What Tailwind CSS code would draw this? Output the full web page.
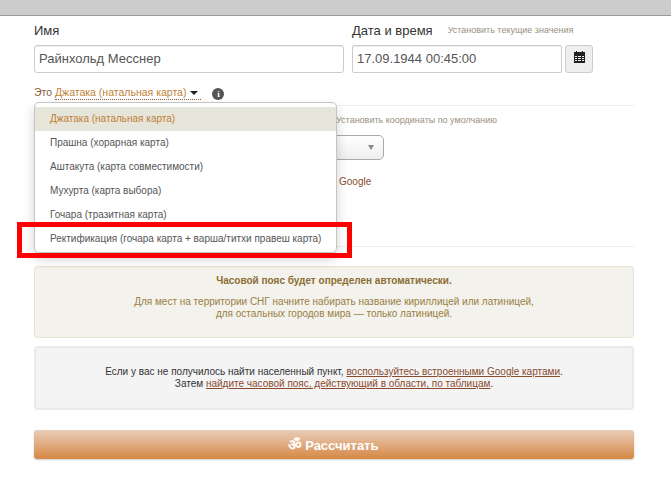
<!DOCTYPE html>
<html lang="ru">
<head>
  <meta charset="UTF-8">
  <title>Джатака</title>
  <script src="https://cdn.jsdelivr.net/npm/@tailwindcss/browser@4"></script>
</head>
<body class="bg-white h-[485px] overflow-hidden font-['Liberation_Sans',sans-serif] text-[#333]">
  <div class="h-[16px] bg-[#cccccc] border-b border-[#999]"></div>

  <div class="relative w-[600px] ml-[34px]">
    <!-- name + date -->
    <div class="flex gap-2 pt-[6px]">
      <div class="w-[310px]">
        <div class="text-[13px] h-[17px] leading-[17px] mb-[6px]">Имя</div>
        <div class="h-[28px] border border-[#ccc] rounded-[3px] px-[4px] text-[13px] leading-[26px] text-[#555] shadow-[inset_0_1px_1px_rgba(0,0,0,0.075)]">Райнхольд Месснер</div>
      </div>
      <div>
        <div class="flex items-center gap-[15px] h-[17px] text-[13px] leading-[17px] mb-[6px]">
          <span>Дата и время</span>
          <span class="text-[9px] text-[#9a8f7e]">Установить текущие значения</span>
        </div>
        <div class="flex gap-[3px]">
          <div class="w-[210px] h-[28px] border border-[#ccc] rounded-[2px] px-[4px] text-[13px] leading-[26px] text-[#555] shadow-[inset_0_1px_1px_rgba(0,0,0,0.075)]">17.09.1944 00:45:00</div>
          <div class="w-[28px] h-[28px] border border-[#ccc] rounded-[3px] bg-[#eee] flex items-center justify-center">
            <svg class="mb-[5px]" width="11" height="12" viewBox="0 0 11 12" fill="#222" shape-rendering="crispEdges">
              <rect x="2" y="0" width="1" height="1"/><rect x="8" y="0" width="1" height="1"/>
              <rect x="0" y="1" width="11" height="3"/>
              <path d="M0 4h11v1H0zM0 6h11v1H0zM0 8h11v1H0zM0 10h11v2H0zM0 4h1v8H0zM3 4h1v8H3zM7 4h1v8H7zM10 4h1v8H10z"/>
            </svg>
          </div>
        </div>
      </div>
    </div>

    <!-- chart type -->
    <div class="flex items-center h-[16px] mt-[12px] text-[10.5px] text-[#8a5a35]">
      <span>Это&nbsp;</span>
      <span class="flex items-center gap-[4px] pr-[3px] border-b border-dotted border-[#8a5a35] text-[#c07f35] leading-[13px]">
        Джатака (натальная карта)
        <span class="w-0 h-0 border-x-[4px] border-x-transparent border-t-[4px] border-t-[#222]"></span>
      </span>
      <span class="ml-[11px] mt-[2px] w-[12px] h-[12px] rounded-full bg-[#555] text-white text-[9px] font-bold font-['Liberation_Serif',serif] leading-[12px] text-center">i</span>
    </div>
    <div class="border-t border-[#eee] mt-[4px]"></div>

    <!-- coordinates (mostly under the menu) -->
    <div class="pl-[302px] pt-[8px] text-[9px] leading-[12px] text-[#9a8f7e]">Установить координаты по умолчанию</div>
    <div class="mt-[9px] w-[350px] h-[25px] border border-[#aaa] rounded-[5px] bg-gradient-to-b from-white to-[#eee] flex items-center justify-end pr-[9px]">
      <span class="w-0 h-0 border-x-[3.5px] border-x-transparent border-t-[5px] border-t-[#888]"></span>
    </div>
    <div class="pl-[305px] mt-[16px] text-[10px] leading-[12px] text-[#8a4b2d]">Google</div>
    <div class="border-t border-[#eee] mt-[58px]"></div>

    <!-- alerts -->
    <div class="mt-[19px] h-[72px] border border-[#e6e2cd] rounded-[4px] bg-[#f3f2ec] text-center text-[10px] leading-[12px] text-[#8c6d34] pt-[8px]">
      <div class="font-bold">Часовой пояс будет определен автоматически.</div>
      <div class="mt-[9px] text-[#9a7f45]">Для мест на территории СНГ начните набирать название кириллицей или латиницей,<br>для остальных городов мира — только латиницей.</div>
    </div>
    <div class="mt-[8px] h-[64px] border-2 border-[#eaeaea] rounded-[4px] bg-[#f4f4f5] text-center text-[10px] leading-[12px] pt-[18px]">
      Если у вас не получилось найти населенный пункт, <a class="text-[#8a4b2d] underline">воспользуйтесь встроенными Google картами</a>.<br>
      Затем <a class="text-[#8a4b2d] underline">найдите часовой пояс, действующий в области, по таблицам</a>.
    </div>

    <!-- submit -->
    <div class="mt-[20px] h-[29px] rounded-[3px] bg-gradient-to-b from-[#e8cdb8] to-[#d58840] shadow-[0_1px_2px_rgba(0,0,0,0.2)] text-center text-white font-bold text-[13px] leading-[29px] pr-[2px]"><span class="text-[15px]">ॐ</span> Рассчитать</div>

    <!-- dropdown menu -->
    <div class="absolute left-0 top-[86px] w-[303px] h-[151px] bg-white border border-[#c4c4c4] rounded-[5px] shadow-[0_6px_12px_rgba(0,0,0,0.175)] pt-[4px] text-[10px] text-[#555] overflow-hidden">
      <div class="h-[24px] leading-[24px] pl-[15px] bg-[#e6e5da] text-[#c07f35]">Джатака (натальная карта)</div>
      <div class="h-[24px] leading-[24px] pl-[15px]">Прашна (хорарная карта)</div>
      <div class="h-[24px] leading-[24px] pl-[15px]">Аштакута (карта совместимости)</div>
      <div class="h-[24px] leading-[24px] pl-[15px]">Мухурта (карта выбора)</div>
      <div class="h-[24px] leading-[24px] pl-[15px]">Гочара (тразитная карта)</div>
      <div class="h-[24px] leading-[24px] pl-[15px]">Ректификация (гочара карта + варша/титхи правеш карта)</div>
    </div>

    <!-- red highlight -->
    <div class="absolute left-[-17px] top-[206px] w-[335px] h-[36px] border-[5px] border-[#ff0000]"></div>
  </div>
</body>
</html>
